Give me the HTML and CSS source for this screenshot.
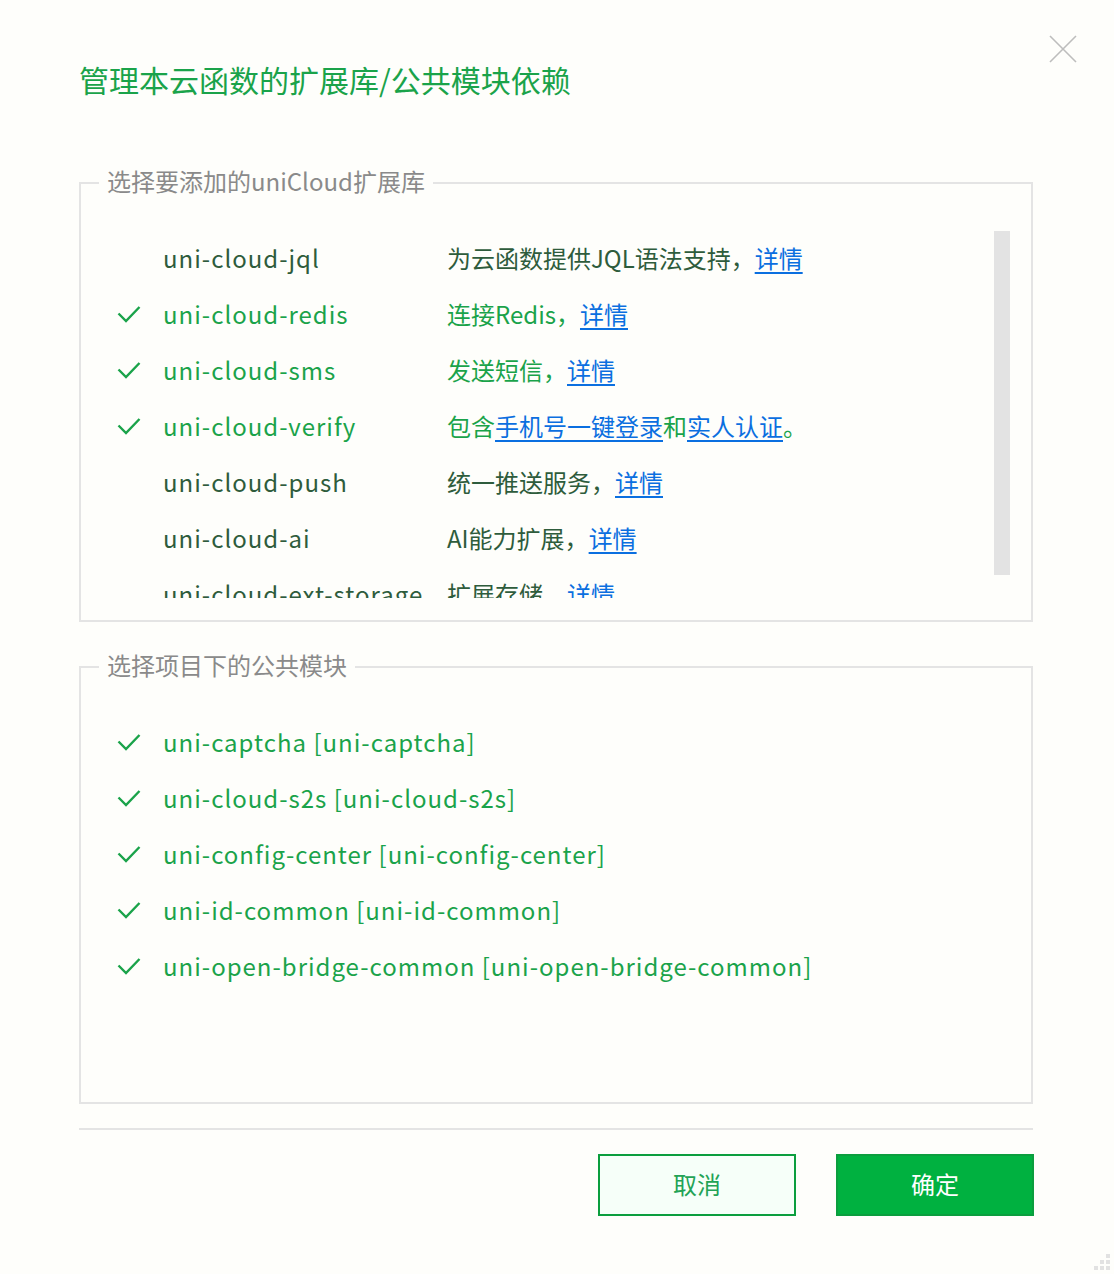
FILE: index.html
```html
<!DOCTYPE html>
<html lang="zh-CN">
<head>
<meta charset="utf-8">
<title>管理本云函数的扩展库/公共模块依赖</title>
<link rel="stylesheet" href="styles.css">
</head>
<body>
<div class="dialog">
  <button class="close" aria-label="关闭">
    <svg width="28" height="28" viewBox="0 0 28 28"><path d="M1 1L27 27M27 1L1 27" stroke="#bdbdbd" stroke-width="1.6" fill="none"/></svg>
  </button>
  <h1 class="title">管理本云函数的扩展库/公共模块依赖</h1>

  <fieldset class="group">
    <legend class="legend">选择要添加的uniCloud扩展库</legend>
    <div class="group-body">
      <div class="list">
        <div class="row"><span class="check"></span><span class="name">uni-cloud-jql</span><span class="desc">为云函数提供JQL语法支持，<a class="link">详情</a></span></div>
        <div class="row on"><span class="check"><svg width="24" height="20" viewBox="0 0 24 20"><path d="M1.5 8.5L9 16L22.5 2" stroke="currentColor" stroke-width="2.4" fill="none"/></svg></span><span class="name">uni-cloud-redis</span><span class="desc">连接Redis，<a class="link">详情</a></span></div>
        <div class="row on"><span class="check"><svg width="24" height="20" viewBox="0 0 24 20"><path d="M1.5 8.5L9 16L22.5 2" stroke="currentColor" stroke-width="2.4" fill="none"/></svg></span><span class="name">uni-cloud-sms</span><span class="desc">发送短信，<a class="link">详情</a></span></div>
        <div class="row on"><span class="check"><svg width="24" height="20" viewBox="0 0 24 20"><path d="M1.5 8.5L9 16L22.5 2" stroke="currentColor" stroke-width="2.4" fill="none"/></svg></span><span class="name">uni-cloud-verify</span><span class="desc">包含<a class="link">手机号一键登录</a>和<a class="link">实人认证</a>。</span></div>
        <div class="row"><span class="check"></span><span class="name">uni-cloud-push</span><span class="desc">统一推送服务，<a class="link">详情</a></span></div>
        <div class="row"><span class="check"></span><span class="name">uni-cloud-ai</span><span class="desc">AI能力扩展，<a class="link">详情</a></span></div>
        <div class="row"><span class="check"></span><span class="name">uni-cloud-ext-storage</span><span class="desc">扩展存储，<a class="link">详情</a></span></div>
      </div>
      <div class="track"><div class="thumb"></div></div>
    </div>
  </fieldset>

  <fieldset class="group group-2">
    <legend class="legend">选择项目下的公共模块</legend>
    <div class="list">
      <div class="row on"><span class="check"><svg width="24" height="20" viewBox="0 0 24 20"><path d="M1.5 8.5L9 16L22.5 2" stroke="currentColor" stroke-width="2.4" fill="none"/></svg></span><span class="name wide">uni-captcha [uni-captcha]</span></div>
      <div class="row on"><span class="check"><svg width="24" height="20" viewBox="0 0 24 20"><path d="M1.5 8.5L9 16L22.5 2" stroke="currentColor" stroke-width="2.4" fill="none"/></svg></span><span class="name wide">uni-cloud-s2s [uni-cloud-s2s]</span></div>
      <div class="row on"><span class="check"><svg width="24" height="20" viewBox="0 0 24 20"><path d="M1.5 8.5L9 16L22.5 2" stroke="currentColor" stroke-width="2.4" fill="none"/></svg></span><span class="name wide">uni-config-center [uni-config-center]</span></div>
      <div class="row on"><span class="check"><svg width="24" height="20" viewBox="0 0 24 20"><path d="M1.5 8.5L9 16L22.5 2" stroke="currentColor" stroke-width="2.4" fill="none"/></svg></span><span class="name wide">uni-id-common [uni-id-common]</span></div>
      <div class="row on"><span class="check"><svg width="24" height="20" viewBox="0 0 24 20"><path d="M1.5 8.5L9 16L22.5 2" stroke="currentColor" stroke-width="2.4" fill="none"/></svg></span><span class="name wide">uni-open-bridge-common [uni-open-bridge-common]</span></div>
    </div>
  </fieldset>

  <div class="divider"></div>

  <div class="actions">
    <button class="btn btn-cancel">取消</button>
    <button class="btn btn-ok">确定</button>
  </div>

  <svg class="grip" width="18" height="18" viewBox="0 0 18 18">
    <rect x="12" y="0" width="4" height="4" fill="#e2e2e2"/>
    <rect x="6" y="6" width="4" height="4" fill="#e2e2e2"/>
    <rect x="12" y="6" width="4" height="4" fill="#e2e2e2"/>
    <rect x="0" y="12" width="4" height="4" fill="#e2e2e2"/>
    <rect x="6" y="12" width="4" height="4" fill="#e2e2e2"/>
    <rect x="12" y="12" width="4" height="4" fill="#e2e2e2"/>
  </svg>
</div>
</body>
</html>
```

FILE: styles.css
```css
* { box-sizing: border-box; }
html, body { margin: 0; padding: 0; }
body {
  background: #fefefb;
  font-family: "Noto Sans CJK SC", "Noto Sans", sans-serif;
  color: #2e5c3c;
}
.dialog {
  position: relative;
  width: 1114px;
  height: 1274px;
  padding: 59px 81px 0 79px;
}
.close {
  position: absolute;
  top: 35px;
  right: 37px;
  width: 28px;
  height: 28px;
  padding: 0;
  border: 0;
  background: none;
}
.close svg { display: block; }
.title {
  margin: 0;
  font-size: 30px;
  font-weight: 400;
  line-height: 40px;
  color: #1aa34a;
}
.group {
  margin: 68px 0 0 0;
  padding: 0 21px 22px 18px;
  border: 2px solid #e4e4e4;
  min-width: 0;
}
.group-2 { margin-top: 29px; padding-bottom: 20px; }
.legend {
  padding: 0 8px 4px;
  font-size: 24px;
  line-height: 28px;
  color: #8a8a8a;
}
.group-body {
  display: flex;
  margin-top: 32px;
}
.group-2 .list { margin-top: 32px; }
.list {
  flex: 1;
  height: 367px;
  overflow: hidden;
}
.track {
  width: 16px;
  flex: none;
}
.thumb {
  height: 344px;
  background: #e3e3e3;
}
.row {
  display: flex;
  align-items: center;
  height: 56px;
  padding-left: 18px;
  padding-bottom: 4px;
  font-size: 24px;
  white-space: nowrap;
}
.name {
  width: 284px;
  flex: none;
  letter-spacing: 1px;
}
.row.on { color: #1aa34a; }
.check {
  width: 46px;
  flex: none;
  display: flex;
  align-items: center;
  color: #1aa34a;
  padding-top: 4px;
}
.check svg { display: block; }
.name.wide { width: auto; }
.desc { flex: none; }
.link {
  color: #0b6fe0;
  text-decoration: underline;
  text-underline-offset: 4px;
  text-decoration-thickness: 1.5px;
}
.divider {
  margin-top: 24px;
  height: 2px;
  background: #e4e4e4;
}
.actions {
  display: flex;
  justify-content: flex-end;
  gap: 40px;
  margin-top: 24px;
  margin-right: -1px;
}
.btn {
  width: 198px;
  height: 62px;
  border: 2px solid #0b9e3e;
  font-family: inherit;
  font-size: 24px;
  padding: 0 0 4px;
}
.btn-cancel { background: #f6fff9; color: #23a356; }
.btn-ok { background: #00b140; color: #fff; }
.grip {
  position: absolute;
  right: 2px;
  bottom: 2px;
}
```
